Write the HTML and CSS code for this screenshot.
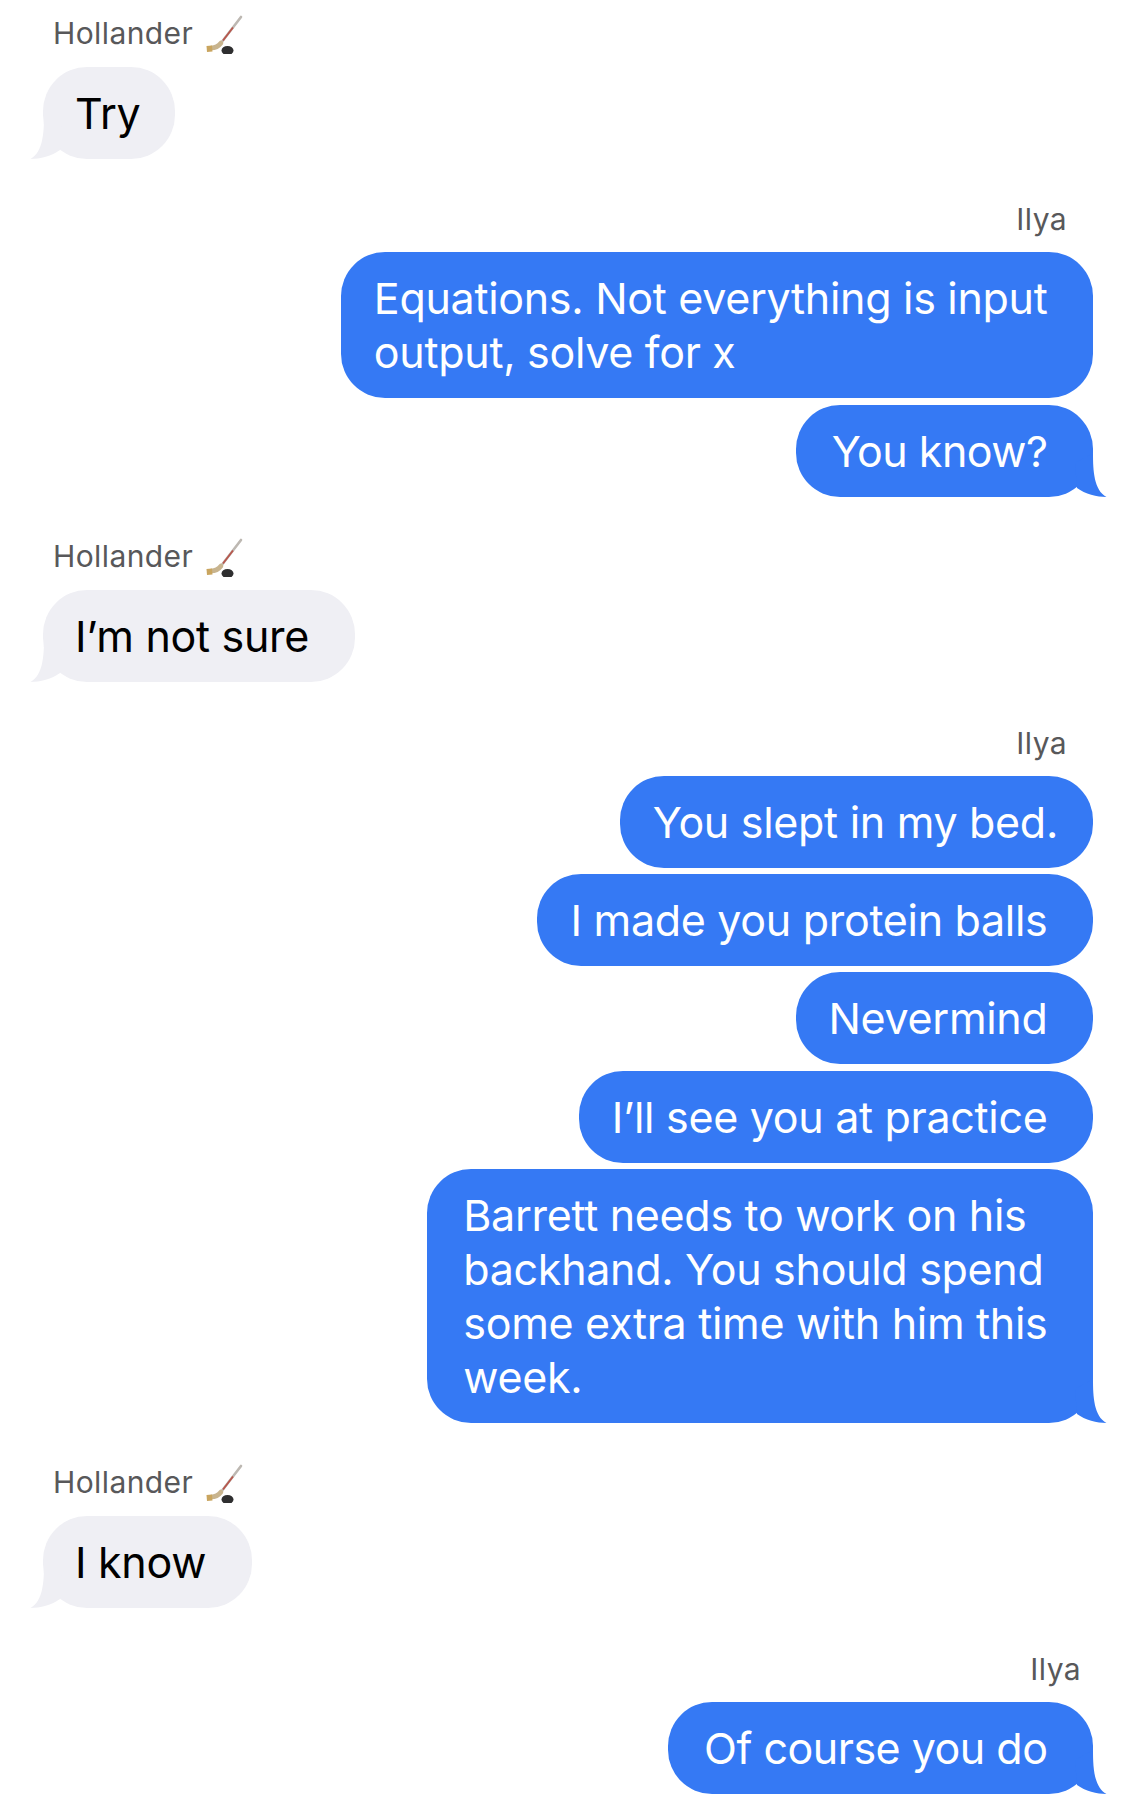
FILE: index.html
```html
<!DOCTYPE html>
<html>
<head>
    <meta charset="UTF-8">
    <meta name="viewport" content="width=device-width, initial-scale=1.0">
    <title>Messages</title>
    <link rel="stylesheet" href="styles.css">
</head>
<body>
    <!-- Shared shapes: bubble tail and the hockey stick next to the contact name -->
    <svg class="defs" width="0" height="0">
        <symbol id="tail" viewBox="0 0 32 44">
            <path d="M18 0C18 18 19 37 31.5 44C22 44 10 41 2 35L0 10Z"/>
        </symbol>
        <symbol id="stick" viewBox="0 0 40 40">
            <path d="M38 3L18 29" stroke="#bdb8b2" stroke-width="2.6" fill="none" stroke-linecap="round"/>
            <path d="M30 13.5L20 26.5" stroke="#b8564c" stroke-width="1.8" fill="none"/>
            <path d="M18 29C15 33 11 34 8 34" stroke="#c8b48e" stroke-width="4.6" fill="none" stroke-linecap="round"/>
            <path d="M3.5 32L9 31.5L9.5 37.5L4 38Z" fill="#c9a55f"/>
            <ellipse cx="24.5" cy="36.5" rx="6" ry="4.6" fill="#2f2f30"/>
        </symbol>
    </svg>

    <div class="thread">
        <div class="group">
            <div class="name">Hollander <svg class="stick"><use href="#stick"/></svg></div>
            <div class="bubble them tight">Try<svg class="tail"><use href="#tail"/></svg></div>
        </div>

        <div class="group mine">
            <div class="name">Ilya</div>
            <div class="bubble me">Equations. Not everything is input<br>output, solve for x</div>
            <div class="bubble me end short">You know?<svg class="tail"><use href="#tail"/></svg></div>
        </div>

        <div class="group">
            <div class="name">Hollander <svg class="stick"><use href="#stick"/></svg></div>
            <div class="bubble them">I’m not sure<svg class="tail"><use href="#tail"/></svg></div>
        </div>

        <div class="group mine">
            <div class="name">Ilya</div>
            <div class="bubble me tight">You slept in my bed.</div>
            <div class="bubble me">I made you protein balls</div>
            <div class="bubble me">Nevermind</div>
            <div class="bubble me">I’ll see you at practice</div>
            <div class="bubble me end">Barrett needs to work on his<br>backhand. You should spend<br>some extra time with him this<br>week.<svg class="tail"><use href="#tail"/></svg></div>
        </div>

        <div class="group">
            <div class="name">Hollander <svg class="stick"><use href="#stick"/></svg></div>
            <div class="bubble them">I know<svg class="tail"><use href="#tail"/></svg></div>
        </div>

        <div class="group mine">
            <div class="name wide">Ilya</div>
            <div class="bubble me end short">Of course you do<svg class="tail"><use href="#tail"/></svg></div>
        </div>
    </div>
</body>
</html>
```

FILE: styles.css
```css
* {
    box-sizing: border-box;
}

html, body {
    margin: 0;
    padding: 0;
    background: #fff;
}

.defs {
    display: block;
    height: 0;
}

.thread {
    display: flex;
    flex-direction: column;
    gap: 42.5px;
    padding: 15.5px 43px 0;
    font-family: Inter, "Liberation Sans", sans-serif;
}

.group {
    display: flex;
    flex-direction: column;
    align-items: flex-start;
    gap: 6.2px;
}

.group.mine {
    align-items: flex-end;
}

.name {
    display: flex;
    align-items: center;
    height: 36px;
    margin-bottom: 9px;
    padding: 0 10px 2px;
    font-size: 30px;
    letter-spacing: 0.4px;
    color: #58585a;
    white-space: pre;
}

.mine .name {
    padding: 0 26px 0 0;
}

.mine .name.wide {
    padding-right: 12px;
}

.stick {
    width: 40px;
    height: 40px;
    margin: 0 0 -2px 1px;
}

.bubble {
    position: relative;
    padding: 19px 45.5px 19px 33px;
    border-radius: 44px;
    font-size: 43px;
    line-height: 54px;
    letter-spacing: -0.3px;
    white-space: nowrap;
}

.bubble.tight {
    padding-right: 35px;
}

/* last bubble of a run sits a little further in on the left */
.bubble.end {
    padding-left: 36px;
}

.bubble.short {
    letter-spacing: -0.5px;
}

.me {
    background: #3579f4;
    color: #fff;
}

.them {
    background: #efeff4;
    color: #000;
    padding-left: 32px;
}

.tail {
    position: absolute;
    bottom: 0;
    width: 32px;
    height: 44px;
}

.me .tail {
    right: -14px;
    fill: #3579f4;
}

.them .tail {
    left: -13px;
    fill: #efeff4;
    transform: scaleX(-1);
}
```
